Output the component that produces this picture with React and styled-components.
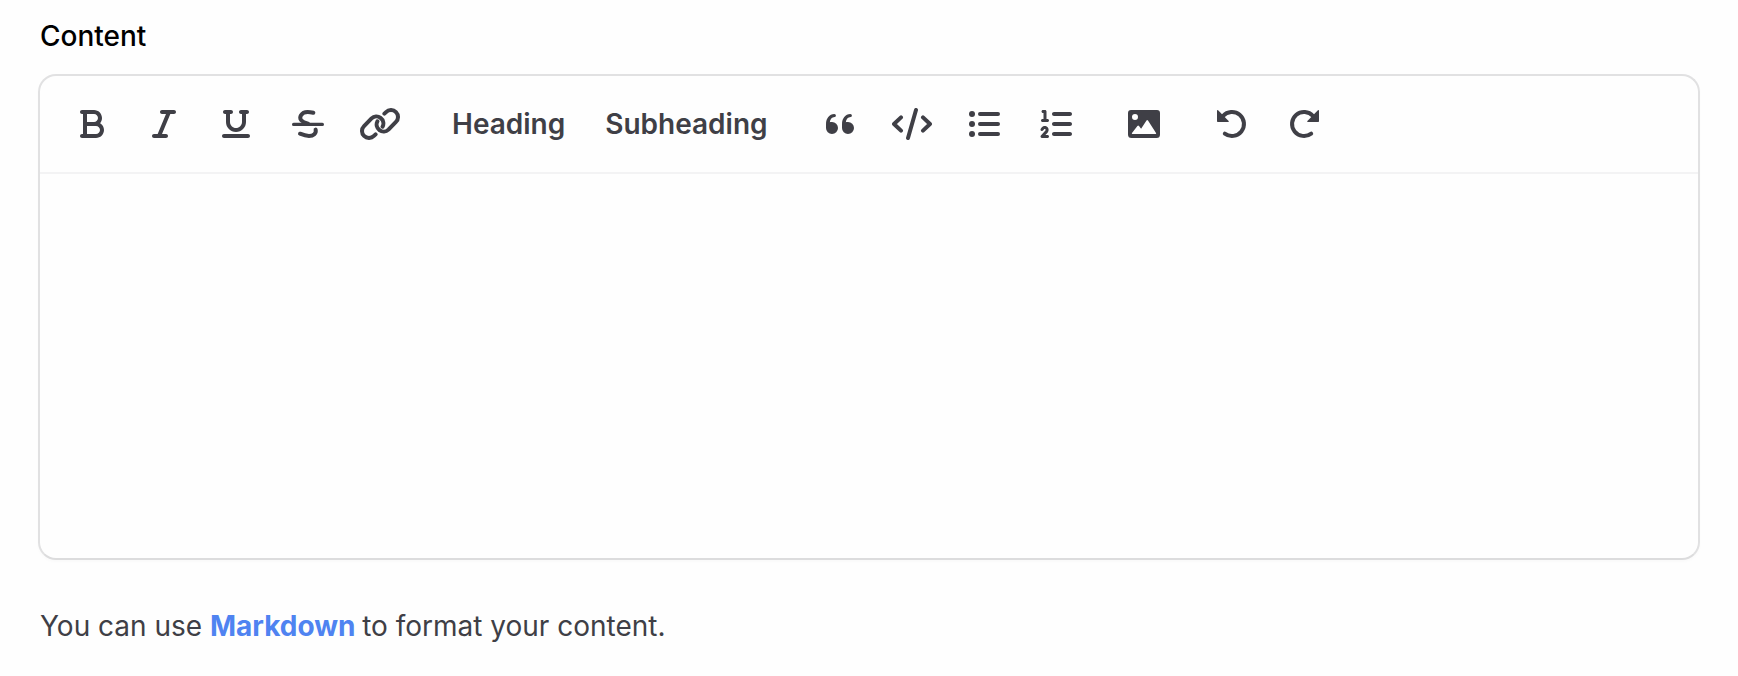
import React from 'react';
import styled, { createGlobalStyle } from 'styled-components';
import { FaBold, FaItalic, FaUnderline, FaListOl } from 'react-icons/fa6';

const GlobalStyle = createGlobalStyle`
  * { box-sizing: border-box; }
  body {
    margin: 0;
    background: #fefefe;
    font-family: Inter, "Liberation Sans", sans-serif;
    font-size: 28px;
    line-height: 40px;
    color: #3f3f46;
  }
`;

const Field = styled.div`
  display: flex;
  flex-direction: column;
  padding: 16px 38px 0;
`;

const Label = styled.label`
  padding-left: 2px;
  margin-bottom: 18px;
  font-weight: 500;
  color: #000;
`;

const Editor = styled.div`
  display: flex;
  flex-direction: column;
  height: 486px;
  border: 2px solid #e1e1e2;
  border-bottom-color: #dcdcdd;
  border-radius: 18px;
  box-shadow: 0 2px 3px rgba(0, 0, 0, 0.02);
`;

const Toolbar = styled.div`
  display: flex;
  gap: 24px;
  padding: 16px 20px;
  border-bottom: 2px solid #f3f3f4;
`;

const Group = styled.div`
  display: flex;
  gap: 8px;
`;

const Button = styled.button`
  display: flex;
  align-items: center;
  justify-content: center;
  height: 64px;
  width: ${(p) => (p.$text ? 'auto' : '64px')};
  padding: ${(p) => (p.$text ? '0 16px' : '0')};
  border: 0;
  border-radius: 12px;
  background: transparent;
  color: inherit;
  font: inherit;
  font-weight: 600;

  svg {
    display: block;
    flex: none;
    width: auto;
    height: 32px;
  }
`;

const TextArea = styled.div`
  flex: 1;
`;

const Hint = styled.p`
  margin: 46px 0 0;
  padding-left: 2px;
`;

const HintLink = styled.a`
  margin-right: -1.2px;
  font-weight: 700;
  color: #4f83f1;
`;

const Glyph = styled.svg.attrs({ viewBox: '-20 -16 40 32' })`
  fill: ${(p) => (p.$solid ? 'currentColor' : 'none')};
  stroke: ${(p) => (p.$solid ? 'none' : 'currentColor')};
  stroke-width: 4;
  stroke-linecap: round;
  stroke-linejoin: round;
`;

const StrikeIcon = () => (
  <Glyph>
    <path d="M5.3 -11.2C1 -12.4 -4.8 -12.6 -7 -8.8C-9.2 -4.6 -6.6 -2.4 0 -0.4" />
    <path d="M7.6 5.6C8.6 9.6 5.4 12 1 12C-2.2 12 -5.4 10.8 -8 9.7" />
    <path d="M-14.4 0.4H14.4" strokeWidth="3.2" />
  </Glyph>
);

const chainLoop = 'M4.4 -10.3L6.05 -11.95A7 7 0 1 1 15.95 -2.05L8.45 5.65A7 7 0 0 1 -2.6 -2.6';

const LinkIcon = () => (
  <Glyph>
    <path d={chainLoop} />
    <path d={chainLoop} transform="scale(-1 -1)" />
  </Glyph>
);

const quoteMark = 'M-14 4V0C-14 -5.6 -10.6 -9.8 -5.7 -10C-3.6 -10 -3.6 -7 -5.4 -6.9C-8.2 -6.5 -9.9 -4.8 -10.2 -1.7C-9.6 -2 -8.8 -2.1 -8 -2A6 6 0 1 1 -14 4Z';

const QuoteIcon = () => (
  <Glyph $solid>
    <path d={quoteMark} />
    <path d={quoteMark} transform="translate(16 0)" />
  </Glyph>
);

const CodeIcon = () => (
  <Glyph>
    <path d="M-11 -6.6L-18 0L-11 6.6M11 -6.6L18 0L11 6.6M4 -14L-4 14" />
  </Glyph>
);

const ListIcon = () => (
  <Glyph>
    <path d="M-4 -10H14M-4 0H14M-4 10H14" />
    <g fill="currentColor" stroke="none">
      <circle cx="-12" cy="-10" r="3" />
      <circle cx="-12" cy="0" r="3" />
      <circle cx="-12" cy="10" r="3" />
    </g>
  </Glyph>
);

const ImageIcon = () => (
  <Glyph $solid>
    <path
      fillRule="evenodd"
      d="M-13 -14H13A3 3 0 0 1 16 -11V10.5A3.5 3.5 0 0 1 12.5 14H-12.5A3.5 3.5 0 0 1 -16 10.5V-11A3 3 0 0 1 -13 -14ZM-9 -10A3 3 0 1 0 -9 -4A3 3 0 1 0 -9 -10ZM-11.6 10H11.6Q12.6 10 12 9L4 -3.6Q3.2 -4.6 2.5 -3.6L-2.9 4.8L-5 2Q-5.8 1.2 -6.6 2L-12 9Q-12.6 10 -11.6 10Z"
    />
  </Glyph>
);

const TurnIcon = ({ flip }) => (
  <Glyph>
    <g transform={flip ? 'scale(-1 1)' : undefined}>
      <path d="M-9 -8A12 12 0 1 1 -7.2 9.6" />
      <path
        d="M-15 -13.2V-2.8Q-15 -2 -14.2 -2H-3.9Q-2.6 -2 -3.4 -3L-13.9 -13.8Q-15 -14.6 -15 -13.2Z"
        fill="currentColor"
        stroke="none"
      />
    </g>
  </Glyph>
);

export default function App() {
  return (
    <>
      <GlobalStyle />
      <Field>
        <Label>Content</Label>
        <Editor>
          <Toolbar>
            <Group>
              <Button aria-label="Bold"><FaBold /></Button>
              <Button aria-label="Italic"><FaItalic /></Button>
              <Button aria-label="Underline"><FaUnderline /></Button>
              <Button aria-label="Strikethrough"><StrikeIcon /></Button>
              <Button aria-label="Link"><LinkIcon /></Button>
            </Group>
            <Group>
              <Button $text>Heading</Button>
              <Button $text>Subheading</Button>
            </Group>
            <Group>
              <Button aria-label="Quote"><QuoteIcon /></Button>
              <Button aria-label="Code"><CodeIcon /></Button>
              <Button aria-label="Bulleted list"><ListIcon /></Button>
              <Button aria-label="Numbered list"><FaListOl /></Button>
            </Group>
            <Group>
              <Button aria-label="Image"><ImageIcon /></Button>
            </Group>
            <Group>
              <Button aria-label="Undo"><TurnIcon /></Button>
              <Button aria-label="Redo"><TurnIcon flip /></Button>
            </Group>
          </Toolbar>
          <TextArea />
        </Editor>
        <Hint>
          You can use <HintLink>Markdown</HintLink> to format your content.
        </Hint>
      </Field>
    </>
  );
}
